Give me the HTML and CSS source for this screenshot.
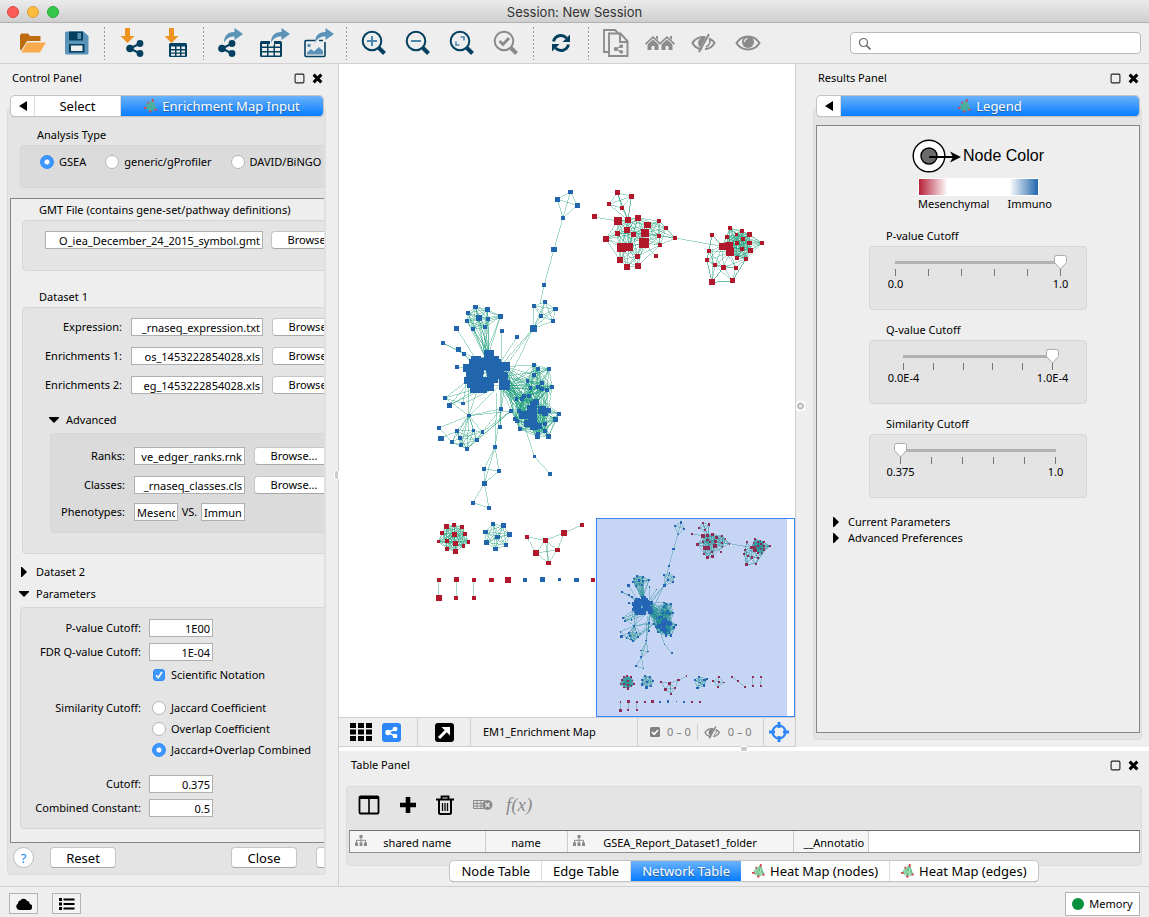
FILE: index.html
```html
<!DOCTYPE html>
<html lang="en">
<head>
<meta charset="utf-8">
<meta name="viewport" content="width=device-width, initial-scale=1">
<title>Session: New Session</title>
<link rel="stylesheet" href="styles.css">
</head>
<body>
<svg class="defs" aria-hidden="true">
  <symbol id="i-em" viewBox="0 0 16 16">
    <path class="em-line" d="M9 2 1.500 10 7 14 13.500 12ZM9 2 7 14M10 2l3.500 10M1.500 10l12 2M5 4l-3 6 8-4 3 6M5 4l2 10 5-7M9 2 4 12M5 4l8 8M10 2 7 14"/>
    <path class="em-dot" d="M9 0h2v3H9zM4 3h2v2H4zM0 9h3v2H0zM6 13h2.500v2.500H6zM12 11h2.500v2H12z"/>
  </symbol>
  <symbol id="i-float" viewBox="0 0 10 10"><rect x="1" y="1" width="8" height="8" rx="1" fill="none" stroke="#222"/></symbol>
  <symbol id="i-close" viewBox="0 0 10 10"><path d="M1.500 1.500l7 7M8.500 1.500l-7 7" stroke="#000" stroke-width="2.800"/></symbol>
  <symbol id="i-left" viewBox="0 0 8 10"><path d="M8 0v10L0 5z"/></symbol>
  <symbol id="i-right" viewBox="0 0 10 10"><path d="M2 0h1l5 5-5 5H2z"/></symbol>
  <symbol id="i-down" viewBox="0 0 10 10"><path d="M0 2h10v1L5 8 0 3z"/></symbol>
  <symbol id="i-share" viewBox="0 0 18 17"><path d="M14 3.500 4 8.500l10 5" fill="none" stroke="currentColor" stroke-width="2"/><circle cx="14" cy="3.500" r="3.400"/><circle cx="4" cy="8.500" r="3.800"/><circle cx="14" cy="13.500" r="3.400"/></symbol>
  <symbol id="i-lens" viewBox="0 0 26 26"><circle cx="11" cy="11" r="9.300" fill="none" stroke="currentColor" stroke-width="2"/><path d="M17.500 17.500l6 6" stroke="currentColor" stroke-width="4"/></symbol>
  <symbol id="i-eye-slash" viewBox="0 0 26 20"><path d="M11 16C6.500 16 3 13 1.500 10 3.500 6.500 8 4 12.500 4l2 .3M18 5.500c3 1.500 5 3.500 5.500 4.500-2 3.500-6 6-9.500 6" fill="none" stroke="currentColor" stroke-width="2"/><path d="M13 4.500a5.500 5.500 0 0 0-3.500 10l5-9.800z"/><path d="M18 1 8 19" stroke="currentColor" stroke-width="2"/><path d="M18.500 6.500c1 3-.5 6-3.500 7.500" fill="none" stroke="currentColor" stroke-width="1.500"/></symbol>
  <symbol id="i-tree" viewBox="0 0 12 11"><path d="M4.500 0h3v3h-3zM0 7.500h3V11H0zM4.500 7.500h3V11h-3zM9 7.500h3V11H9z"/><path d="M6 3v5M1.500 8V5.300h9V8" fill="none" stroke="currentColor"/></symbol>
  <symbol id="i-curve" viewBox="0 0 20 16"><path d="M1 15C1 8 4 4 11.500 4V0L20 6l-8.500 6V8.500C6.500 8.500 3.500 10 1 15z"/></symbol>
</svg>

<header class="titlebar">
  <div class="lights">
    <button class="light light-red" aria-label="Close window"></button>
    <button class="light light-yellow" aria-label="Minimise window"></button>
    <button class="light light-green" aria-label="Zoom window"></button>
  </div>
  <h1 class="title">Session: New Session</h1>
</header>

<nav class="toolbar" aria-label="Main tools">
  <button class="tool" aria-label="Open session"><svg width="26" height="20" viewBox="0 0 26 20"><path fill="#bd6c10" d="M0 16V2l1.500-1.500H8L10 3h10.500v5H7L1 18z"/><path fill="#f9ab4c" d="M1.500 19.500 7 9.500h19l-6 10z"/></svg></button>
  <button class="tool" aria-label="Save session"><svg width="24" height="24" viewBox="0 0 24 24"><path fill="#5a93b7" d="M0 2q0-1.500 1.500-1.500h17L23.500 5v17q0 1.500-1.500 1.500H1.500Q0 23.500 0 22z"/><path fill="#03405f" d="M4 .5h14v9H4zM4 13h15.500v8.500H4z"/><path fill="#eee" d="M6 14.500h11.500V20H6z"/><path fill="#5a93b7" d="M12.500 2H16v6h-3.500z"/></svg></button>
  <span class="dots"></span>
  <button class="tool" aria-label="Import network"><svg width="24" height="30" viewBox="0 0 24 30"><path fill="#ee931f" d="M5 0h5v8h4.500L7.500 15 .5 8H5z"/><svg class="navy" x="6" y="12" width="18" height="17"><use href="#i-share"/></svg></svg></button>
  <button class="tool" aria-label="Import table"><svg width="24" height="30" viewBox="0 0 24 30"><path fill="#ee931f" d="M5 0h5v8h4.500L7.500 15 .5 8H5z"/><rect x="5" y="15" width="18" height="14" rx="1.500" fill="#03405f"/><path fill="#eee" d="M7 18.500h4V21H7zm5.500 0H16V21h-3.500zm5 0H21V21h-3.500zM7 22.500h4v2H7zm5.500 0H16v2h-3.500zm5 0H21v2h-3.500zM7 25.700h4v2H7zm5.500 0H16v2h-3.500zm5 0H21v2h-3.500z"/></svg></button>
  <span class="dots"></span>
  <button class="tool" aria-label="Export network"><svg width="26" height="30" viewBox="0 0 26 30"><svg x="5" y="0" width="20" height="16" fill="#5a93b7"><use href="#i-curve"/></svg><svg class="navy" x="0" y="12" width="18" height="17"><use href="#i-share"/></svg></svg></button>
  <button class="tool" aria-label="Export table"><svg width="30" height="30" viewBox="0 0 30 30"><rect x="0" y="13" width="22" height="16" rx="1.500" fill="#03405f"/><path fill="#eee" d="M2 16h5v2.500H2zm6.500 0h5v2.500h-5zm6.500 0h5v2.500h-5zM2 20h5v3H2zm6.500 0h5v3h-5zm6.500 0h5v3h-5zM2 24.500h5v3H2zm6.500 0h5v3h-5zm6.500 0h5v3h-5z"/><path d="M12 17V10h8v3" fill="none" stroke="#eee" stroke-width="4"/><svg x="10" y="0" width="20" height="16" fill="#5a93b7"><use href="#i-curve"/></svg></svg></button>
  <button class="tool" aria-label="Export image"><svg width="30" height="30" viewBox="0 0 30 30"><rect x="1" y="12.500" width="20" height="16" rx="1" fill="none" stroke="#03405f" stroke-width="1.600"/><circle cx="5" cy="17.500" r="1.800" fill="#5a93b7"/><path fill="#5a93b7" d="M3 26.500v-2l4-3.500 3 2.500 5-4.500 4 4v3.500z"/><path d="M13 14V9h8v5" fill="none" stroke="#eee" stroke-width="4"/><svg x="10" y="0" width="20" height="16" fill="#5a93b7"><use href="#i-curve"/></svg></svg></button>
  <span class="dots"></span>
  <button class="tool navy" aria-label="Zoom in"><svg width="26" height="26"><use href="#i-lens"/><path d="M6 11h10M11 6v10" stroke="#4a86ad" stroke-width="2"/></svg></button>
  <button class="tool navy" aria-label="Zoom out"><svg width="26" height="26"><use href="#i-lens"/><path d="M6 11h10" stroke="#4a86ad" stroke-width="2"/></svg></button>
  <button class="tool navy" aria-label="Fit content"><svg width="26" height="26"><use href="#i-lens"/><path d="M11.500 7H15v3.500M7 11.500V15h3.500" fill="none" stroke="#4a86ad" stroke-width="1.600"/></svg></button>
  <button class="tool grey" aria-label="Zoom selected"><svg width="26" height="26"><use href="#i-lens"/><path d="M6.500 11l3.500 3.500L16 8" fill="none" stroke="currentColor" stroke-width="2.800"/></svg></button>
  <span class="dots"></span>
  <button class="tool navy" aria-label="Apply layout"><svg width="20" height="20" viewBox="0 0 20 20"><path d="M2.500 8.500C4 2.500 11 .5 15.500 5M17.500 11.500C16 17.500 9 19.500 4.500 15" fill="none" stroke="currentColor" stroke-width="3"/><path d="M19 1.500V9h-7.500zM1 18.500V11h7.500z"/></svg></button>
  <span class="dots"></span>
  <button class="tool grey" aria-label="New network from selection"><svg width="26" height="28" viewBox="0 0 26 28"><path d="M5 23H1V1h11l4 4" fill="none" stroke="currentColor" stroke-width="1.800"/><path d="M6 4.500h11.500L24.500 12v15H6zM17 5v8h7.500" fill="none" stroke="currentColor" stroke-width="1.900"/><svg x="10.500" y="15" width="10" height="10"><use href="#i-share"/></svg></svg></button>
  <button class="tool grey" aria-label="First neighbours"><svg width="30" height="16" viewBox="0 0 30 16"><path d="M0 8.500 8 1l7 6.500L22 1l8 7.500-1 1.200-7-6.500-7 6.500-7-6.500-7 6.500z"/><path d="M11 1h2v4l-2-2zM25 1h2v4l-2-2zM2.500 9.500 8 4.500l5.500 5V15H9.500v-4h-3v4h-4zM16.500 9.500l5.500-5 5.500 5V15h-4v-4h-3v4h-4z"/></svg></button>
  <button class="tool grey" aria-label="Hide selected"><svg width="26" height="20"><use href="#i-eye-slash"/></svg></button>
  <button class="tool grey" aria-label="Show all"><svg width="26" height="20" viewBox="0 0 26 20"><path d="M1.500 10C4 6 8 3.500 13 3.500S22 6 24.500 10C22 14 18 16.500 13 16.500S4 14 1.500 10z" fill="none" stroke="currentColor" stroke-width="2"/><circle cx="13" cy="9" r="6"/><path d="M9.500 9Q9.500 6 12.500 5.500" fill="none" stroke="#eee" stroke-width="1.200"/></svg></button>
  <label class="search">
    <svg width="13" height="13" viewBox="0 0 13 13"><circle cx="5.500" cy="5.500" r="4" fill="none" stroke="#666" stroke-width="1.200"/><path d="M8.500 8.500l4 4" stroke="#666" stroke-width="1.600"/></svg>
    <input class="search-input" type="search" aria-label="Search">
  </label>
</nav>

<main class="workspace">
  <section class="panel control">
    <header class="panel-head"><h2>Control Panel</h2><button aria-label="Float panel"><svg width="11" height="11"><use href="#i-float"/></svg></button><button aria-label="Close panel"><svg width="11" height="11"><use href="#i-close"/></svg></button></header>
    <div class="tabs">
      <button class="tab tab-arrow" aria-label="Previous tab"><svg width="8" height="10"><use href="#i-left"/></svg></button>
      <button class="tab tab-select">Select</button>
      <button class="tab tab-active tab-grow"><svg width="14" height="16"><use href="#i-em"/></svg>Enrichment Map Input</button>
    </div>
    <form class="well control-well">
      <h3 class="caption analysis-caption">Analysis Type</h3>
      <div class="box analysis">
        <label class="choice"><input type="radio" name="analysis" checked>GSEA</label>
        <label class="choice"><input type="radio" name="analysis">generic/gProfiler</label>
        <label class="choice"><input type="radio" name="analysis">DAVID/BiNGO</label>
      </div>
      <div class="pane">
        <h3 class="caption"><label for="gmt">GMT File (contains gene-set/pathway definitions)</label></h3>
        <div class="box gmt">
          <input id="gmt" class="field tail" value="O_iea_December_24_2015_symbol.gmt"><button type="button" class="btn browse">Browse...</button>
        </div>
        <h3 class="caption dataset-caption">Dataset 1</h3>
        <div class="box dataset">
          <div class="files">
            <label for="expr">Expression:</label><input id="expr" class="field tail" value="_rnaseq_expression.txt"><button type="button" class="btn browse">Browse...</button>
            <label for="enr1">Enrichments 1:</label><input id="enr1" class="field tail" value="os_1453222854028.xls"><button type="button" class="btn browse">Browse...</button>
            <label for="enr2">Enrichments 2:</label><input id="enr2" class="field tail" value="eg_1453222854028.xls"><button type="button" class="btn browse">Browse...</button>
          </div>
          <button type="button" class="twisty advanced"><svg width="10" height="10"><use href="#i-down"/></svg>Advanced</button>
          <div class="box inner">
            <div class="files files-inner">
              <label for="ranks">Ranks:</label><input id="ranks" class="field tail" value="ve_edger_ranks.rnk"><button type="button" class="btn browse">Browse...</button>
              <label for="classes">Classes:</label><input id="classes" class="field tail" value="_rnaseq_classes.cls"><button type="button" class="btn browse">Browse...</button>
            </div>
            <div class="files files-inner phenotypes">
              <label for="ph1">Phenotypes:</label>
              <div class="versus"><input id="ph1" class="field" value="Mesenchymal"><label for="ph2">VS.</label><input id="ph2" class="field" value="Immuno"></div>
            </div>
          </div>
        </div>
        <button type="button" class="twisty dataset2"><svg width="10" height="10"><use href="#i-right"/></svg>Dataset 2</button>
        <button type="button" class="twisty parameters"><svg width="10" height="10"><use href="#i-down"/></svg>Parameters</button>
        <div class="box params">
          <div class="params-grid">
            <label for="pv">P-value Cutoff:</label><input id="pv" class="field num" value="1E00">
            <label for="qv">FDR Q-value Cutoff:</label><input id="qv" class="field num" value="1E-04">
            <label class="choice sci"><input type="checkbox" checked>Scientific Notation</label>
          </div>
          <div class="params-grid similarity">
            <span>Similarity Cutoff:</span>
            <div class="choices">
              <label class="choice"><input type="radio" name="sim">Jaccard Coefficient</label>
              <label class="choice"><input type="radio" name="sim">Overlap Coefficient</label>
              <label class="choice"><input type="radio" name="sim" checked>Jaccard+Overlap Combined</label>
            </div>
          </div>
          <div class="params-grid cutoffs">
            <label for="cut">Cutoff:</label><input id="cut" class="field num" value="0.375">
            <label for="comb">Combined Constant:</label><input id="comb" class="field num" value="0.5">
          </div>
        </div>
      </div>
      <div class="actions">
        <button type="button" class="help" aria-label="Help">?</button>
        <button type="reset" class="btn big reset">Reset</button>
        <button type="button" class="btn big close">Close</button>
        <button type="submit" class="btn big build" aria-label="Build"></button>
      </div>
    </form>
    <span class="grip grip-left"></span>
  </section>

  <section class="network" aria-label="Network view">
    <div class="canvas">
      <svg class="graph" id="graph"></svg>
      <div class="overview"><svg class="graph" id="overview"></svg><div class="viewport"></div></div>
    </div>
    <footer class="viewbar">
      <div class="vb vb-modes">
        <button aria-label="Grid"><svg width="24" height="20" viewBox="0 0 24 20"><path d="M1 1h6v5H1zM9 1h6v5H9zM17 1h6v5h-6zM1 7.500h6v5H1zM9 7.500h6v5H9zM17 7.500h6v5h-6zM1 14h6v5H1zM9 14h6v5H9zM17 14h6v5h-6z"/></svg></button>
        <button aria-label="View"><svg width="19" height="19" viewBox="0 0 19 19"><rect width="19" height="19" rx="3" fill="#2d87fb"/><svg x="3" y="3.500" width="13" height="12" fill="#fff" color="#fff"><use href="#i-share"/></svg></svg></button>
      </div>
      <div class="vb vb-detach"><button aria-label="Detach view"><svg width="19" height="19" viewBox="0 0 19 19"><rect width="19" height="19" rx="3"/><path d="M4 15l7-7" stroke="#fff" stroke-width="3"/><path d="M6.500 4H15v8.500z" fill="#fff"/></svg></button></div>
      <div class="vb vb-name">EM1_Enrichment Map</div>
      <div class="vb vb-count">
        <span class="count"><svg width="10" height="10" viewBox="0 0 10 10"><rect width="10" height="10" rx="1.500" fill="#808080"/><path d="M2 5l2.200 2.200L8 3" fill="none" stroke="#fff" stroke-width="1.700"/></svg>0 – 0</span>
        <span class="count count-hidden"><svg width="17" height="13" viewBox="0 0 26 20"><use href="#i-eye-slash"/></svg>0 – 0</span>
      </div>
      <div class="vb vb-target"><button aria-label="Toggle overview"><svg width="20" height="20" viewBox="0 0 20 20"><circle cx="10" cy="10" r="6.500" fill="none" stroke="#2d87fb" stroke-width="2.200"/><path d="M10 0v6M10 14v6M0 10h6M14 10h6" stroke="#2d87fb" stroke-width="3"/></svg></button></div>
    </footer>
  </section>

  <section class="panel results">
    <header class="panel-head"><h2>Results Panel</h2><button aria-label="Float panel"><svg width="11" height="11"><use href="#i-float"/></svg></button><button aria-label="Close panel"><svg width="11" height="11"><use href="#i-close"/></svg></button></header>
    <div class="tabs">
      <button class="tab tab-arrow" aria-label="Previous tab"><svg width="8" height="10"><use href="#i-left"/></svg></button>
      <button class="tab tab-active tab-grow"><svg width="14" height="16"><use href="#i-em"/></svg>Legend</button>
    </div>
    <div class="well results-well">
      <div class="pane">
        <div class="legend">
          <div class="node-color"><svg width="50" height="34" viewBox="0 0 50 34"><circle cx="17" cy="17" r="15.800" fill="#fff" stroke="#000" stroke-width="1.400"/><circle cx="17" cy="17" r="8" fill="#6b6b6b" stroke="#000" stroke-width="1.400"/><path d="M17 18h26" stroke="#000" stroke-width="2"/><path d="M38 12.500 49 18l-11 5.500 3-5.500z"/></svg>Node Color</div>
          <div class="ramp"></div>
          <div class="ramp-labels"><span>Mesenchymal</span><span>Immuno</span></div>
          <label class="caption" for="s1">P-value Cutoff</label>
          <div class="box slider slider-p"><input id="s1" type="range" min="0" max="100" value="100"><ul class="ticks"><li>0.0</li><li></li><li></li><li></li><li></li><li>1.0</li></ul></div>
          <label class="caption" for="s2">Q-value Cutoff</label>
          <div class="box slider slider-q"><input id="s2" type="range" min="0" max="100" value="100"><ul class="ticks"><li>0.0E-4</li><li></li><li></li><li></li><li></li><li>1.0E-4</li></ul></div>
          <label class="caption" for="s3">Similarity Cutoff</label>
          <div class="box slider slider-s"><input id="s3" type="range" min="0" max="100" value="0"><ul class="ticks"><li>0.375</li><li></li><li></li><li></li><li></li><li>1.0</li></ul></div>
        </div>
        <button class="twisty"><svg width="10" height="10"><use href="#i-right"/></svg>Current Parameters</button>
        <button class="twisty"><svg width="10" height="10"><use href="#i-right"/></svg>Advanced Preferences</button>
      </div>
    </div>
    <span class="grip grip-right"></span>
  </section>

  <section class="panel tables">
    <header class="panel-head"><h2>Table Panel</h2><button aria-label="Float panel"><svg width="11" height="11"><use href="#i-float"/></svg></button><button aria-label="Close panel"><svg width="11" height="11"><use href="#i-close"/></svg></button></header>
    <div class="well tables-well">
      <div class="table-tools">
        <button aria-label="Show columns"><svg width="22" height="20" viewBox="0 0 22 20"><rect x="1.500" y="1.500" width="19" height="17" rx="1" fill="none" stroke="#000" stroke-width="1.800"/><path d="M1 1h20v3H1zM10.200 3h1.600v15h-1.600z"/></svg></button>
        <button aria-label="Create column"><svg width="18" height="18"><path d="M9 1v16M1 9h16" stroke="#000" stroke-width="4.600"/></svg></button>
        <button aria-label="Delete column"><svg width="18" height="20" viewBox="0 0 18 20" fill="none" stroke="#000"><path d="M0 4.500h18M5.500 4V1.500h7V4" stroke-width="1.800"/><path d="M3 5v12.500q0 1.500 1.500 1.500h9q1.500 0 1.500-1.500V5" stroke-width="2"/><path d="M6.500 8v8M9 8v8M11.500 8v8" stroke-width="1.300"/></svg></button>
        <button class="grey" aria-label="Delete table"><svg width="20" height="12" viewBox="0 0 20 12"><path d="M.5 1.500h11v8H.5zM0 4.500h12M0 7h12M4 1v9M8 1v9" fill="none" stroke="currentColor"/><circle cx="14.500" cy="6" r="5"/><path d="M12.500 4l4 4M16.500 4l-4 4" stroke="#e4e4e4" stroke-width="1.600"/></svg></button>
        <button class="fx" aria-label="Function builder">f(x)</button>
      </div>
      <div class="sheet">
        <table>
          <thead><tr>
            <th class="c1"><svg width="12" height="11"><use href="#i-tree"/></svg>shared name</th>
            <th class="c2">name</th>
            <th class="c3"><svg width="12" height="11"><use href="#i-tree"/></svg>GSEA_Report_Dataset1_folder</th>
            <th class="c4">__Annotatio</th>
          </tr></thead>
        </table>
      </div>
    </div>
    <div class="tabs table-tabs">
      <button class="tab">Node Table</button>
      <button class="tab">Edge Table</button>
      <button class="tab tab-active">Network Table</button>
      <button class="tab tab-heat"><svg width="14" height="16"><use href="#i-em"/></svg>Heat Map (nodes)</button>
      <button class="tab tab-heat"><svg width="14" height="16"><use href="#i-em"/></svg>Heat Map (edges)</button>
    </div>
    <span class="grip grip-bottom"></span>
  </section>
</main>

<footer class="status">
  <button class="status-btn" aria-label="Cloud"><svg width="16" height="12" viewBox="0 0 16 12"><path d="M3.500 12A3.500 3.500 0 0 1 2 5.500C2 3 4 2.500 4.500 2.500 5.500 0 10 0 11 3c2 0 3 1.500 2.500 3A3 3 0 0 1 13 12z"/></svg></button>
  <button class="status-btn" aria-label="Tasks"><svg width="16" height="12" viewBox="0 0 16 12"><path d="M0 0h3v3H0zM0 4.500h3v3H0zM0 9h3v3H0zM4.500.5h11v2h-11zM4.500 5h11v2h-11zM4.500 9.500h11v2h-11z"/></svg></button>
  <button class="status-btn memory"><span class="led"></span>Memory</button>
</footer>
<script src="network.js"></script>
</body>
</html>
```
FILE: styles.css
```css
* { box-sizing: border-box; }
html { height: 100%; }
body {
  margin: 0;
  min-height: 100%;
  display: flex;
  flex-direction: column;
  background: #eee;
  color: #000;
  font: 11px/16px "Noto Sans", "Open Sans", sans-serif;
}
button, input { font: inherit; color: inherit; }
button { background: none; border: 0; padding: 0; }
h1, h2, h3 { margin: 0; font-size: 11px; font-weight: 400; }
svg { display: block; flex: none; }
.defs { position: absolute; width: 0; height: 0; }
.em-line { fill: none; stroke: #55b878; stroke-width: 0.8; }
.em-dot { fill: #d8434f; }
.navy { color: #03405f; fill: #03405f; }
.grey { color: #8b8b8b; fill: #8b8b8b; }

/* title bar */
.titlebar {
  display: grid;
  grid-template-columns: 1fr auto 1fr;
  align-items: center;
  height: 23px;
  padding-top: 2px;
  border-bottom: 1px solid #b1b1b1;
  background: linear-gradient(#ebebeb, #cfcfcf);
}
.lights { display: flex; gap: 8px; padding-left: 7px; }
.light { width: 12px; height: 12px; border-radius: 50%; }
.light-red { background: #fc5b57; border: 1px solid #df4744; }
.light-yellow { background: #fdbc40; border: 1px solid #de9f34; }
.light-green { background: #34c849; border: 1px solid #27aa35; }
.title { font: 13px/16px Inter, Roboto, sans-serif; color: #333; }

/* main toolbar */
.toolbar {
  display: flex;
  align-items: center;
  height: 41px;
  padding: 0 8px 0 11px;
  border-bottom: 1px solid #cfcfcf;
}
.tool { display: grid; place-items: center; flex: none; width: 44px; height: 36px; }
.dots { flex: none; width: 11px; height: 34px; background: radial-gradient(circle, #999 1px, transparent 1px) 0 0 / 11px 4px; }
.search {
  display: flex;
  align-items: center;
  gap: 4px;
  flex: 0 1 291px;
  height: 22px;
  margin-left: auto;
  padding: 0 7px;
  border: 1px solid #b9b9b9;
  border-radius: 4px;
  background: #fff;
}
.search-input { flex: 1; min-width: 0; border: 0; outline: 0; background: none; }

/* workspace */
.workspace {
  flex: 1;
  display: grid;
  grid-template: "control network results" 1fr "control tables tables" auto / 339px minmax(0, 1fr) 353px;
}
.panel { position: relative; display: flex; flex-direction: column; min-width: 0; }
.panel-head { display: flex; align-items: center; gap: 7px; height: 28px; margin-bottom: 4px; }
.panel-head h2 { flex: 1; }
.grip { position: absolute; border: 1px solid #fff; background: #cdcdcd; border-radius: 2px; }

/* tabs */
.tabs {
  position: relative;
  z-index: 1;
  display: flex;
  height: 20px;
  border-radius: 4px;
  background: #fff;
  box-shadow: 0 0 0 1px #c4c4c4, 0 1px 1px #999;
}
.tab { display: flex; align-items: center; justify-content: center; gap: 4px; font-size: 13px; border-right: 1px solid #ddd; white-space: nowrap; }
.tab:last-child { border-right: 0; }
.tab-arrow { width: 24px; }
.tab-select { width: 86px; }
.tab-grow { flex: 1; border-radius: 0 4px 4px 0; }
.tab-active { color: #fff; background: linear-gradient(#6bb3fa, #067cff); border: 0; text-shadow: 0 1px 1px #2b5f9a; }

/* sunken groups */
.well { border: 1px solid #dcdcdc; border-radius: 4px; background: #e4e4e4; margin-top: -9px; }
.box { border: 1px solid #d6d6d6; border-radius: 4px; background: #e4e4e4; }
.pane { border: 1px solid #868686; background: #eee; overflow: hidden; }
.caption { display: block; height: 16px; white-space: nowrap; }

/* control panel */
.control { grid-area: control; border-right: 1px solid #cfcfcf; }
.control .panel-head { padding: 0 15px 0 12px; }
.control .tabs { margin: 0 15px 0 11px; }
.control-well { margin: -9px 12px 11px 7px; padding: 0 1px 6px 2px; display: flex; flex-direction: column; flex: 1; }
.control-well .pane { border-right: 0; flex: 1; padding: 3px 0 12px; }
.analysis-caption { margin: 19px 0 2px 27px; }
.analysis { display: flex; gap: 19px; height: 43px; margin: 0 0 10px 10px; padding: 8px 0 0 19px; border-right: 0; background: #dbdbdb; border-radius: 4px 0 0 4px; overflow: hidden; }
.choice { display: flex; align-items: center; gap: 5px; height: 16px; white-space: nowrap; }
.choice input { appearance: none; flex: none; width: 14px; height: 14px; margin: 0; border: 1px solid #b4b4b4; border-radius: 50%; background: #fff; }
.choice input:checked { border-color: #2f8dfb; background: radial-gradient(circle, #fff 2px, #3b97fd 3px); }
.choice input[type="checkbox"] { width: 12px; height: 12px; margin-right: 1px; border-radius: 3px; }
.choice input[type="checkbox"]:checked { background: #3b97fd url("data:image/svg+xml,%3Csvg xmlns='http://www.w3.org/2000/svg' viewBox='0 0 10 10'%3E%3Cpath d='M2 5.300l2.200 2.500L8 2' fill='none' stroke='%23fff' stroke-width='1.600'/%3E%3C/svg%3E"); }
.pane .box { margin-right: -12px; }
.pane .caption { padding-left: 28px; }
.field { min-width: 0; width: 100%; height: 18px; padding: 0 2px; border: 1px solid #b0b0b0; border-radius: 0; background: #fff; outline: 0; }
.num, .tail { text-align: right; }
.btn { height: 18px; border: 1px solid #c6c6c6; border-bottom-color: #a8a8a8; border-radius: 4px; background: #fff; white-space: nowrap; }
.browse { width: 80px; height: 18px; line-height: 14px; }
.gmt { display: grid; grid-template-columns: 218px 80px; gap: 8px; margin: 2px 0 0 11px; padding: 10px 0 21px 22px; }
.dataset-caption { margin-top: 18px; }
.dataset { margin: 2px 0 0 11px; padding: 10px 0 20px; }
.files { display: grid; grid-template-columns: 99px 132px 80px; align-items: center; column-gap: 9px; row-gap: 11px; text-align: right; }
.files-inner { grid-template-columns: 74px 111px 80px; }
.phenotypes { grid-template-columns: 74px 111px; margin-top: 9px; }
.versus { display: grid; grid-template-columns: 44px 1fr 44px; align-items: center; text-align: center; }
.twisty { display: flex; align-items: center; gap: 7px; height: 16px; white-space: nowrap; }
.advanced { margin: 18px 0 0 26px; }
.inner { margin: 5px 0 0 27px; padding: 13px 0 11px; background: #dbdbdb; }
.dataset2 { margin: 10px 0 0 8px; }
.parameters { margin: 6px 0 0 8px; }
.params { margin: 5px 0 0 9px; padding: 11px 0 11px; }
.params-grid { display: grid; grid-template-columns: 120px 64px; align-items: center; gap: 6px 8px; text-align: right; }
.params-grid > span { align-self: start; }
.sci { grid-column: 2; margin-left: 4px; }
.similarity { margin-top: 17px; }
.choices { display: grid; gap: 5px; margin-left: 3px; }
.cutoffs { margin-top: 17px; }
.actions { display: flex; align-items: center; padding: 4px 0 0 3px; overflow: hidden; }
.help { width: 21px; height: 21px; border: 1px solid #bcbcbc; border-radius: 50%; background: #fff; color: #1683fb; font-size: 13px; line-height: 16px; }
.big { flex: none; width: 66px; height: 21px; font-size: 13px; line-height: 16px; }
.reset { margin-left: 16px; }
.close { margin-left: auto; }
.build { width: 66px; margin: 0 -58px 0 19px; }
.grip-left { right: -1px; top: 406px; width: 5px; height: 10px; }

/* network view */
.network { grid-area: network; display: flex; flex-direction: column; border-right: 1px solid #cfcfcf; }
.canvas { position: relative; flex: 1; overflow: hidden; background: #fff; }
.graph { position: absolute; inset: 0; width: 100%; height: 100%; shape-rendering: crispEdges; }
.edge { stroke: #1b9e77; stroke-opacity: 0.4; stroke-width: 3; }
#overview .edge { stroke-width: 6; }
.blue { fill: #2166ac; }
.red { fill: #b2182b; }
.overview { position: absolute; right: 0; bottom: 0; width: 199px; height: 199px; border: 1px solid #3b86fb; background: #fff; overflow: hidden; }
.viewport { position: absolute; inset: 0 7px 0 0; background: rgba(44, 99, 211, 0.27); }
.viewbar { display: flex; height: 30px; border-top: 1px solid #cfcfcf; border-bottom: 1px solid #cfcfcf; }
.vb { display: flex; align-items: center; border-left: 1px solid #cfcfcf; }
.vb-modes { flex: 0 0 78px; gap: 9px; padding-left: 10px; border-left: 0; }
.vb-detach { flex: 0 0 53px; padding-left: 17px; }
.vb-name { flex: 1; padding-left: 12px; white-space: nowrap; overflow: hidden; }
.vb-count { flex: 0 0 126px; padding-left: 12px; color: #808080; }
.count { display: flex; align-items: center; gap: 7px; }
.count-hidden { margin-left: 6px; padding-left: 6px; border-left: 1px solid #cfcfcf; fill: #808080; }
.vb-target { flex: 0 0 32px; padding-left: 5px; }

/* results panel */
.results { grid-area: results; }
.results .panel-head { padding: 0 10px 0 22px; }
.results .tabs { margin: 0 10px 0 21px; }
.results-well { flex: 1; margin: -9px 7px 7px 17px; padding: 17px 1px 6px 2px; display: flex; }
.results-well .pane { flex: 1; }
.legend { width: 218px; margin: 13px auto 16px; }
.node-color { display: flex; align-items: center; justify-content: center; gap: 1px; font: 16px/34px "Liberation Sans", Arial, sans-serif; white-space: nowrap; }
.ramp { width: 121px; height: 18px; margin: 5px 0 0 49px; border: 1px solid #fff; background: linear-gradient(90deg, #b8213a, #fff 24%, #fff 76%, #2166ac); }
.ramp-labels { display: flex; justify-content: space-between; width: 134px; margin: 0 0 16px 49px; }
.legend .caption { padding-left: 17px; margin-bottom: 2px; }
.legend .box { margin: 0 0 12px; }
.slider { height: 64px; padding: 8px 25px 0; }
.slider-q { padding: 8px 33px 0; }
.slider-s { padding: 8px 30px 0; }
.slider input { appearance: none; display: block; width: calc(100% + 12px); height: 14px; margin: 0 -6px; background: linear-gradient(#b2b2b2, #b2b2b2) center / calc(100% - 12px) 3px no-repeat; }
.slider input::-webkit-slider-thumb { appearance: none; width: 13px; height: 15px; background: url("data:image/svg+xml,%3Csvg xmlns='http://www.w3.org/2000/svg' viewBox='0 0 13 15'%3E%3Cpath d='M2.500.5h8q2 0 2 2V7.500L6.500 14 .5 7.500V2.500q0-2 2-2z' fill='%23fff' stroke='%23aaa'/%3E%3C/svg%3E"); }
.ticks { display: flex; justify-content: space-between; margin: 0; padding: 0; list-style: none; }
.ticks li { display: flex; flex-direction: column; align-items: center; width: 1px; white-space: nowrap; }
.ticks li::before { content: ""; width: 1px; height: 7px; background: #777; }
.results .twisty { margin-left: 14px; }
.grip-right { left: 0; top: 337px; width: 9px; height: 10px; border-width: 1px; background: radial-gradient(circle, #eee 1px, #bbb 2px, #bbb 3px, #fff 4px); }

/* table panel */
.tables { grid-area: tables; border-top: 4px solid #fff; }
.tables .panel-head { padding: 0 10px 0 12px; margin-bottom: 7px; }
.tables-well { margin: 0 7px 0; padding: 0 1px 12px 2px; }
.table-tools { display: flex; align-items: center; height: 43px; padding: 0 0 7px 9px; gap: 19px; }
.fx { margin-left: -6px; font: italic 19px/20px "Liberation Serif", serif; color: #8b8b8b; }
.sheet { height: 23px; border: 1px solid #8e8e8e; border-top-color: #6e6e6e; background: #fff; overflow: hidden; }
.sheet table { table-layout: fixed; width: 518px; border-collapse: collapse; background: #f5f5f5; }
.sheet th { height: 21px; padding: 3px 0 0; border-right: 1px solid #ccc; font-weight: 400; text-align: center; white-space: nowrap; overflow: hidden; }
.sheet th svg { float: left; margin: 0 -17px 0 5px; color: #8b8b8b; fill: #8b8b8b; }
.c1 { width: 135px; }
.c2 { width: 82px; }
.c3 { width: 226px; }
.sheet .c4 { width: 75px; padding-left: 10px; text-align: left; }
.table-tabs { align-self: center; margin: -5px 0 5px; }
.table-tabs .tab { padding: 0 11px; }
.grip-bottom { left: 401px; top: -5px; width: 8px; height: 6px; }

/* status bar */
.status { display: flex; align-items: center; gap: 14px; height: 31px; padding: 3px 9px 0; border-top: 1px solid #cfcfcf; }
.status-btn { display: flex; align-items: center; justify-content: center; gap: 5px; width: 29px; height: 21px; border: 1px solid #b3b3b3; background: #f3f3f3; }
.memory { width: 75px; height: 24px; margin-left: auto; background: #fff; }
.led { width: 12px; height: 12px; border-radius: 50%; background: #0a8f3c; }
```
FILE: network.js
```js
// Each cluster lists its nodes as [x, y, size]; "mesh" joins every pair closer than the given distance.
const B = "blue", R = "red";
const clusters = [
  { c: B, mesh: 200, n: [[436,36,14],[397,58,14],[457,76,14],[414,114,12]] },
  { c: B, mesh: 0, n: [[387,208,16],[357,316,12]] },
  { c: B, mesh: 200, n: [[327,378,12],[360,366,12],[391,387,14],[348,408,12],[384,423,12],[325,445,20]] },
  { c: B, mesh: 95, n: [[129,399,12],[151,381,14],[187,388,14],[162,414,18],[126,424,13],[144,447,12],[180,442,13],[190,417,13],[226,409,14]] },
  { c: B, mesh: 60, n: [[192,525,30],[154,542,30],[128,564,26],[240,560,28],[236,588,26],[238,615,32],[128,602,22],[150,602,46],[160,565,36],[165,618,40],[202,594,32],[140,545,16],[220,545,16],[202,548,38],[150,624,28],[190,618,32],[195,568,24],[178,552,38],[218,580,36],[140,580,36],[175,602,24],[222,562,30]] },
  { c: B, mesh: 0, n: [[94,445,14],[54,489,12],[100,508,14],[117,522,12],[231,454,11],[276,471,12],[97,561,12],[60,654,12],[73,676,14],[114,671,11],[132,707,11],[228,687,12],[225,741,12],[258,693,12]] },
  { c: B, mesh: 70, n: [[96,753,12],[105,774,12],[108,795,12],[126,807,12],[146,752,9],[155,780,12],[172,756,10],[81,786,12]] },
  { c: B, mesh: 0, n: [[42,744,12],[48,775,16]] },
  { c: B, mesh: 0, n: [[210,802,12],[177,867,12],[222,873,12],[178,910,14],[144,968,12],[192,984,12],[328,829,9],[375,882,12]] },
  { c: B, mesh: 78, n: [[327,555,12],[339,567,12],[372,567,12],[327,585,12],[308,603,10],[351,609,12],[317,624,10],[339,621,12],[351,627,12],[366,630,12],[381,621,12],[297,649,12],[312,648,12],[333,665,18],[325,675,22],[275,657,11],[291,657,11],[282,693,12],[270,717,12],[276,722,12],[285,747,12],[295,705,26],[320,690,30],[350,690,24],[370,691,15],[360,700,16],[323,712,26],[307,730,20],[328,738,24],[343,737,18],[402,702,12],[391,718,15],[360,733,12],[360,753,12],[337,770,15],[339,762,12],[371,769,15]] },
  { c: R, mesh: 150, dx: 465, n: [[112,38,15],[154,49,15],[87,73,13],[126,84,12],[144,120,18]] },
  { c: R, mesh: 92, dx: 465, n: [[114,123,24],[144,120,18],[174,114,18],[203,135,20],[237,123,12],[259,144,11],[141,150,18],[112,160,14],[160,163,15],[195,159,24],[237,168,12],[78,177,18],[192,189,30],[240,195,12],[285,174,12],[124,202,26],[146,201,26],[172,229,15],[120,240,18],[141,262,18],[174,258,18]] },
  { c: R, mesh: 0, dx: 465, n: [[43,111,15],[228,228,12]] },
  { c: R, mesh: 95, dx: 465, n: [[450,145,13],[486,153,12],[508,163,15],[441,171,12],[469,164,10],[489,177,12],[471,189,12],[509,190,13],[546,189,12],[486,207,12],[511,211,15],[471,234,12],[498,237,12],[427,199,20],[447,199,24],[450,217,24]] },
  { c: R, mesh: 78, dx: 465, n: [[396,165,12],[427,199,20],[450,217,24],[387,213,13],[381,241,13],[405,256,13],[430,262,15],[468,264,12],[396,307,18],[457,303,15],[498,237,12]] },
  { c: R, mesh: 120, dy: 990, n: [[64,50,15],[87,45,12],[111,51,12],[52,69,13],[89,73,15],[120,72,12],[41,95,10],[66,93,12],[91,100,15],[130,96,10],[115,108,10],[66,117,12],[91,124,15]] },
  { c: B, mesh: 120, dy: 990, n: [[204,43,13],[235,47,14],[181,66,14],[217,81,14],[253,73,14],[184,97,15],[243,106,13],[211,117,14]] },
  { c: R, mesh: 75, dy: 990, n: [[306,81,12],[361,91,15],[417,69,18],[471,45,12],[397,120,14],[333,129,18],[370,159,14]] },
  { c: R, mesh: 0, dy: 990, n: [[42,210,12],[42,264,18],[95,209,15],[93,264,12],[147,210,12],[147,264,12],[200,210,14],[249,210,18],[504,210,12],[556,210,12]] },
  { c: B, mesh: 0, dy: 990, n: [[300,210,12],[352,208,15],[404,210,9],[455,210,14]] },
  { c: B, mesh: 120, n: [[552,1038,14],[524,1060,14],[587,1060,16],[543,1109,16],[584,1094,14],[556,1075,12],[605,1050,12]] },
  { c: R, mesh: 50, n: [[680,1038,12],[643,1066,14],[712,1075,12],[682,1073,12],[675,1103,12]] },
  { c: R, mesh: 65, n: [[764,1038,12],[807,1066,14],[849,1103,12]] },
  { c: R, mesh: 70, n: [[903,1038,10],[900,1096,12]] },
  { c: R, mesh: 70, n: [[957,1038,14],[952,1096,12]] }
];

// Links between clusters: [x1, y1, x2, y2].
const links = [
  [414,114,387,208],[387,208,357,316],[357,316,345,372],
  [325,445,240,560],[325,445,250,600],[325,445,225,560],[276,471,225,550],[231,454,228,560],
  [94,445,154,540],[54,489,150,535],[54,489,117,522],[100,508,150,560],[117,522,160,560],[97,561,128,564],
  [60,654,130,600],[60,654,160,625],[60,654,114,671],[73,676,130,610],[73,676,170,620],[73,676,190,620],[114,671,125,600],[114,671,200,630],
  [132,707,130,600],[132,707,160,620],[132,707,220,620],[132,707,258,693],[132,707,228,687],[132,707,60,654],[132,707,42,744],
  [132,707,96,753],[132,707,105,774],[132,707,126,807],[132,707,146,752],[132,707,155,780],[132,707,172,756],[132,707,81,786],[132,707,108,795],
  [42,744,81,786],[48,775,96,753],[155,780,258,693],[172,756,258,693],[172,756,228,687],[126,807,258,693],
  [228,687,230,620],[228,687,240,615],[225,741,228,620],[225,741,228,687],[210,802,216,640],[210,802,228,687],
  [210,802,177,867],[210,802,222,873],[210,802,178,910],[177,867,222,873],[177,867,178,910],[222,873,178,910],
  [178,910,144,968],[178,910,192,984],[144,968,192,984],[300,745,328,829],[328,829,375,882],
  [508,111,579,123],[750,174,892,199],[693,228,657,189],
  [861,307,862,207],[922,303,963,237],[861,307,922,303],[861,307,895,262],[861,307,846,241],
  [42,1200,42,1254],[95,1199,93,1254],[147,1200,147,1254],[370,1149,367,1085],[577,38,609,120],[619,49,609,120]
];
[[192,520],[180,530]].forEach(h => clusters[3].n.forEach(p => links.push([p[0], p[1], h[0], h[1]])));
const fan = clusters[9].n;
[[240,560],[238,590],[238,615],[245,625],[225,620]].forEach((h, i) =>
  fan.forEach((p, j) => { if ((i + j) % 3 === 0) links.push([p[0], p[1], h[0], h[1]]); }));

function draw(id, transform) {
  let edges = "", nodes = "";
  const line = (a, b, c, d) => `<path class="edge" d="M${a} ${b}L${c} ${d}"/>`;
  clusters.forEach(k => {
    const pts = k.n.map(p => [p[0] + (k.dx || 0), p[1] + (k.dy || 0), p[2]]);
    pts.forEach((p, i) => {
      nodes += `<rect class="${k.c}" x="${p[0] - p[2] / 2}" y="${p[1] - p[2] / 2}" width="${p[2]}" height="${p[2]}"/>`;
      pts.slice(i + 1).forEach(q => {
        if (Math.hypot(p[0] - q[0], p[1] - q[1]) < k.mesh) edges += line(p[0], p[1], q[0], q[1]);
      });
    });
  });
  links.forEach(l => { edges += line(...l); });
  document.getElementById(id).innerHTML = `<g transform="${transform}">${edges}${nodes}</g>`;
}
draw("graph", "translate(86 116) scale(0.3333)");
draw("overview", "translate(17 -2) scale(0.154)");
```
